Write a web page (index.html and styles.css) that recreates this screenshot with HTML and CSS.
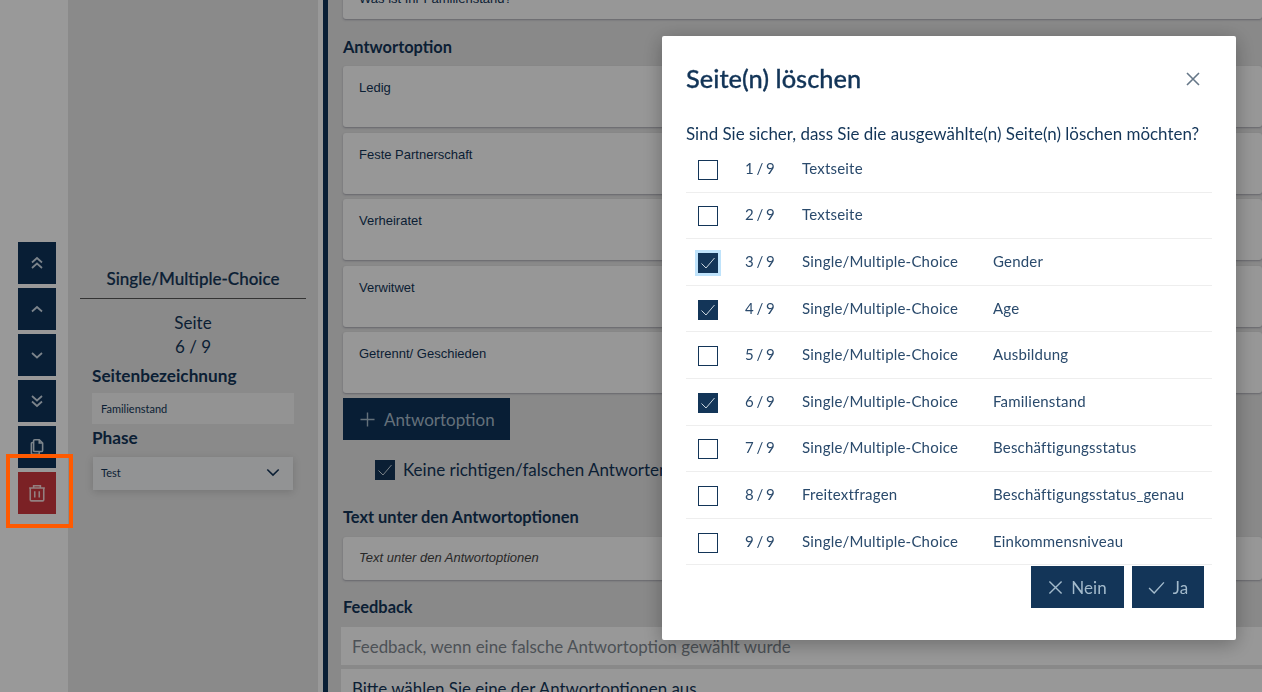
FILE: index.html
```html
<!DOCTYPE html>
<html lang="de">
  <head>
    <meta charset="UTF-8" />
    <title>Seite(n) löschen</title>
    <link rel="stylesheet" href="styles.css">
  </head>
  <body>
    <div class="page">
      <div class="rail">
        <button class="rail-btn"><svg viewBox="0 0 16 16"><path d="M3 7.500 8 3l5 4.500M3 13l5-4.500 5 4.500"/></svg></button>
        <button class="rail-btn"><svg viewBox="0 0 16 16"><path d="M3 10.500 8 6l5 4.500"/></svg></button>
        <button class="rail-btn"><svg viewBox="0 0 16 16"><path d="M3 6l5 4.500L13 6"/></svg></button>
        <button class="rail-btn"><svg viewBox="0 0 16 16"><path d="M3 3l5 4.500L13 3M3 8.500 8 13l5-4.500"/></svg></button>
        <button class="rail-btn rail-btn-big"><svg viewBox="0 0 16 16"><path d="M6 1.500h4l3 3V11a1 1 0 0 1-1 1H6a1 1 0 0 1-1-1V2.500a1 1 0 0 1 1-1ZM10 1.500v3h3M5 4H4a1 1 0 0 0-1 1v8.500a1 1 0 0 0 1 1h5a1 1 0 0 0 1-1V12"/></svg></button>
        <button class="rail-btn rail-btn-big rail-btn-red"><svg viewBox="0 0 16 16"><path d="M1 3.500h14M5 3.500v-2h6v2M2 3.500v10.500a1 1 0 0 0 1 1h10a1 1 0 0 0 1-1V3.500M6 6.500V12M10 6.500V12"/></svg></button>
      </div>

      <aside class="sidebar">
        <h3 class="side-title">Single/Multiple-Choice</h3>
        <div class="side-page">Seite<br />6 / 9</div>
        <label class="side-label">Seitenbezeichnung</label>
        <div class="side-input">Familienstand</div>
        <label class="side-label side-label-phase">Phase</label>
        <div class="side-select">
          Test
          <svg viewBox="0 0 16 10"><path d="M1.500 1.500 8 8l6.500-6.500"/></svg>
        </div>
      </aside>

      <main class="editor">
        <div class="card card-top">Was ist Ihr Familienstand?</div>
        <h4 class="heading heading-options">Antwortoption</h4>
        <div class="card card-option">Ledig</div>
        <div class="card card-option">Feste Partnerschaft</div>
        <div class="card card-option">Verheiratet</div>
        <div class="card card-option">Verwitwet</div>
        <div class="card card-option">Getrennt/ Geschieden</div>
        <button class="add-btn"><svg viewBox="0 0 16 16"><path d="M8 .5v15M.5 8h15"/></svg>Antwortoption</button>
        <div class="no-answers">
          <span class="check check-on"><svg viewBox="0 0 20 20"><path d="M3.500 10.500 8 15l8.500-10"/></svg></span>
          Keine richtigen/falschen Antworten
        </div>
        <h4 class="heading heading-below">Text unter den Antwortoptionen</h4>
        <div class="card card-below">Text unter den Antwortoptionen</div>
        <h4 class="heading heading-feedback">Feedback</h4>
        <div class="feedback feedback-empty">Feedback, wenn eine falsche Antwortoption gewählt wurde</div>
        <div class="feedback">Bitte wählen Sie eine der Antwortoptionen aus.</div>
      </main>
    </div>

    <div class="backdrop">
      <div class="modal">
        <div class="modal-head">
          <h2>Seite(n) löschen</h2>
          <svg class="modal-close" viewBox="0 0 14 14"><path d="M1 1l12 12M13 1 1 13"/></svg>
        </div>
        <p class="modal-question">Sind Sie sicher, dass Sie die ausgewählte(n) Seite(n) löschen möchten?</p>
        <div class="page-list">
          <div class="page-row">
            <span class="check"></span><span class="num">1 / 9</span><span>Textseite</span><span></span>
          </div>
          <div class="page-row">
            <span class="check"></span><span class="num">2 / 9</span><span>Textseite</span><span></span>
          </div>
          <div class="page-row">
            <span class="check check-on check-focus"><svg viewBox="0 0 20 20"><path d="M3.500 10.500 8 15l8.500-10"/></svg></span><span class="num">3 / 9</span><span>Single/Multiple-Choice</span><span>Gender</span>
          </div>
          <div class="page-row">
            <span class="check check-on"><svg viewBox="0 0 20 20"><path d="M3.500 10.500 8 15l8.500-10"/></svg></span><span class="num">4 / 9</span><span>Single/Multiple-Choice</span><span>Age</span>
          </div>
          <div class="page-row">
            <span class="check"></span><span class="num">5 / 9</span><span>Single/Multiple-Choice</span><span>Ausbildung</span>
          </div>
          <div class="page-row">
            <span class="check check-on"><svg viewBox="0 0 20 20"><path d="M3.500 10.500 8 15l8.500-10"/></svg></span><span class="num">6 / 9</span><span>Single/Multiple-Choice</span><span>Familienstand</span>
          </div>
          <div class="page-row">
            <span class="check"></span><span class="num">7 / 9</span><span>Single/Multiple-Choice</span><span>Beschäftigungsstatus</span>
          </div>
          <div class="page-row">
            <span class="check"></span><span class="num">8 / 9</span><span>Freitextfragen</span><span>Beschäftigungsstatus_genau</span>
          </div>
          <div class="page-row">
            <span class="check"></span><span class="num">9 / 9</span><span>Single/Multiple-Choice</span><span>Einkommensniveau</span>
          </div>
        </div>
        <div class="modal-actions">
          <button class="modal-btn modal-btn-no"><svg viewBox="0 0 16 16"><path d="M1.500 1.500l13 13M14.500 1.500l-13 13"/></svg>Nein</button>
          <button class="modal-btn modal-btn-yes"><svg viewBox="0 0 18 14"><path d="M1 7.500 6.500 13 17 1.500"/></svg>Ja</button>
        </div>
      </div>
    </div>

    <div class="marker"></div>
  </body>
</html>
```

FILE: styles.css
```css
html,
body {
  height: 100%;
}

body {
  margin: 0;
  overflow: hidden;
  font-family: Lato, sans-serif;
  color: #133558;
  background: #fff;
}

svg {
  fill: none;
  stroke: currentColor;
}

.page {
  display: flex;
  height: 692px;
  overflow: hidden;
}

/* left button column */
.rail {
  width: 68px;
  flex: none;
  box-sizing: border-box;
  padding: 242px 0 0 18px;
  display: flex;
  flex-direction: column;
  gap: 4px;
  background: #fff;
}

.rail-btn {
  width: 38px;
  height: 42px;
  padding: 0;
  border: none;
  background: #0e3259;
  color: #cfdde8;
  display: flex;
  align-items: center;
  justify-content: center;
}

.rail-btn svg {
  width: 16px;
  height: 16px;
  stroke-width: 1.7;
}

.rail-btn-big svg {
  width: 18px;
  height: 18px;
  stroke-width: 1.4;
}

.rail-btn-red {
  background: #cd383f;
  color: #f5d5d5;
}

.sidebar {
  width: 250px;
  flex: none;
  box-sizing: border-box;
  padding: 268px 12px 0;
  background: #e6e6e6;
}

.side-title {
  margin: 0;
  padding-bottom: 8px;
  border-bottom: 1px solid #555;
  text-align: center;
  font-size: 17px;
  line-height: 22px;
  font-weight: 500;
  -webkit-text-stroke: 0.2px currentColor;
}

.side-page {
  margin-top: 12px;
  text-align: center;
  font-size: 17px;
  line-height: 24px;
}

.side-label {
  display: block;
  margin: 6px 12px 0;
  font-size: 17.200px;
  line-height: 22px;
  font-weight: 700;
}

.side-input {
  margin: 6px 12px 0;
  height: 31px;
  line-height: 31px;
  padding-left: 9px;
  background: #f5f5f5;
  font-size: 11px;
}

.side-label-phase {
  margin-top: 3px;
}

.side-select {
  margin: 8px 13px 0;
  height: 33px;
  box-sizing: border-box;
  padding: 0 13px 2px 8px;
  background: #f4f5f7;
  box-shadow: 0 2px 8px rgba(0, 0, 0, 0.15);
  font-size: 11px;
  display: flex;
  align-items: center;
  justify-content: space-between;
}

.side-select svg {
  width: 14px;
  height: 9px;
  stroke-width: 1.8;
}

/* main form, scrolled a bit */
.editor {
  flex: 1;
  min-width: 0;
  margin-left: 5px;
  padding: 0 0 0 15px;
  border-left: 5px solid #0e3259;
  background: #e4e4e4;
  box-shadow: -5px 0 0 #fff;
}

.card {
  box-sizing: border-box;
  background: #fcfcfc;
  border-radius: 3px;
  box-shadow: 0 1px 2px rgba(60, 60, 90, 0.35);
  padding: 14px 16px;
  font-family: "Liberation Sans", sans-serif;
  font-size: 13px;
  line-height: 16px;
}

.card-top {
  height: 42px;
  margin-top: -23px;
}

.card-option {
  height: 61px;
  margin-top: 5.500px;
}

.heading {
  margin: 0;
  font-size: 16.400px;
  line-height: 20px;
  font-weight: 700;
}

.heading-options {
  margin-top: 18px;
  margin-bottom: 9px;
}

.heading-options + .card-option {
  margin-top: 0;
}

.add-btn {
  margin-top: 5px;
  height: 42px;
  width: 167px;
  padding: 0 0 0 17px;
  border: none;
  background: #0e3259;
  color: #a7bccc;
  font-family: Lato, sans-serif;
  font-size: 17px;
  display: flex;
  align-items: center;
  gap: 9px;
}

.add-btn svg {
  width: 15px;
  height: 15px;
  stroke-width: 1.5;
}

.no-answers {
  margin: 20px 0 0 32px;
  display: flex;
  align-items: center;
  gap: 8px;
  font-size: 17px;
  line-height: 20px;
}

.heading-below {
  margin-top: 27px;
  margin-bottom: 10px;
}

.card-below {
  height: 43px;
  padding-top: 13px;
  font-style: italic;
  color: #444;
}

.heading-feedback {
  margin-top: 17px;
  margin-bottom: 10px;
}

.feedback {
  height: 38px;
  margin-left: -2px;
  padding-left: 11px;
  line-height: 40px;
  background: #fefefe;
  font-size: 16.900px;
}

.feedback-empty {
  margin-bottom: 4px;
  color: #808890;
}

.check {
  width: 20px;
  height: 20px;
  flex: none;
  box-sizing: border-box;
  display: block;
  border: 1.5px solid #133558;
  background: #fff;
}

.check-on {
  background: #133558;
  color: #c9d5de;
  border: none;
}

.check-on svg {
  display: block;
  width: 20px;
  height: 20px;
  stroke-width: 1;
}

.check-focus {
  box-shadow: 0 0 0 3px #bfe3fb;
}

.backdrop {
  position: fixed;
  inset: 0;
  background: rgba(0, 0, 0, 0.4);
  padding: 36px 0 0 662px;
}

.modal {
  width: 574px;
  height: 604px;
  box-sizing: border-box;
  padding: 0 24px;
  background: #fff;
  border-radius: 2px;
  box-shadow: 0 4px 20px rgba(0, 0, 0, 0.3);
}

.modal-head {
  height: 86px;
  box-sizing: border-box;
  padding: 0 12px 2px 0;
  display: flex;
  align-items: center;
  justify-content: space-between;
}

.modal-head h2 {
  margin: 0;
  font-size: 25.400px;
  font-weight: 500;
  -webkit-text-stroke: 0.3px currentColor;
}

.modal-close {
  width: 14px;
  height: 14px;
  margin-top: 2px;
  color: #667788;
  stroke-width: 1.6;
}

.modal-question {
  margin: 0;
  font-size: 16.950px;
  line-height: 24px;
}

.page-row {
  height: 46.600px;
  box-sizing: border-box;
  padding-bottom: 2px;
  border-bottom: 1px solid #eee;
  display: grid;
  grid-template-columns: 59px 57px 191px 1fr;
  align-items: center;
  font-size: 15px;
  letter-spacing: 0.2px;
  color: #2a4a6c;
}

.page-row .check {
  margin: 4px 0 0 12px;
}

.num {
  word-spacing: -1.500px;
}

.modal-actions {
  display: flex;
  justify-content: flex-end;
  gap: 8px;
  padding: 1px 8px 0 0;
}

.modal-btn {
  height: 42px;
  padding: 0;
  border: none;
  background: #133558;
  color: #a3bacb;
  font-family: Lato, sans-serif;
  font-size: 17px;
  display: flex;
  align-items: center;
  justify-content: center;
  gap: 8px;
}

.modal-btn-no {
  width: 93px;
}

.modal-btn-yes {
  width: 72px;
}

.modal-btn-no svg {
  width: 15px;
  height: 15px;
  stroke-width: 1.5;
}

.modal-btn-yes svg {
  width: 17px;
  height: 13px;
  stroke-width: 1.5;
}

/* orange annotation box */
.marker {
  position: absolute;
  left: 6px;
  top: 454px;
  width: 67px;
  height: 74px;
  box-sizing: border-box;
  border: 4px solid #ff5a00;
}
```
